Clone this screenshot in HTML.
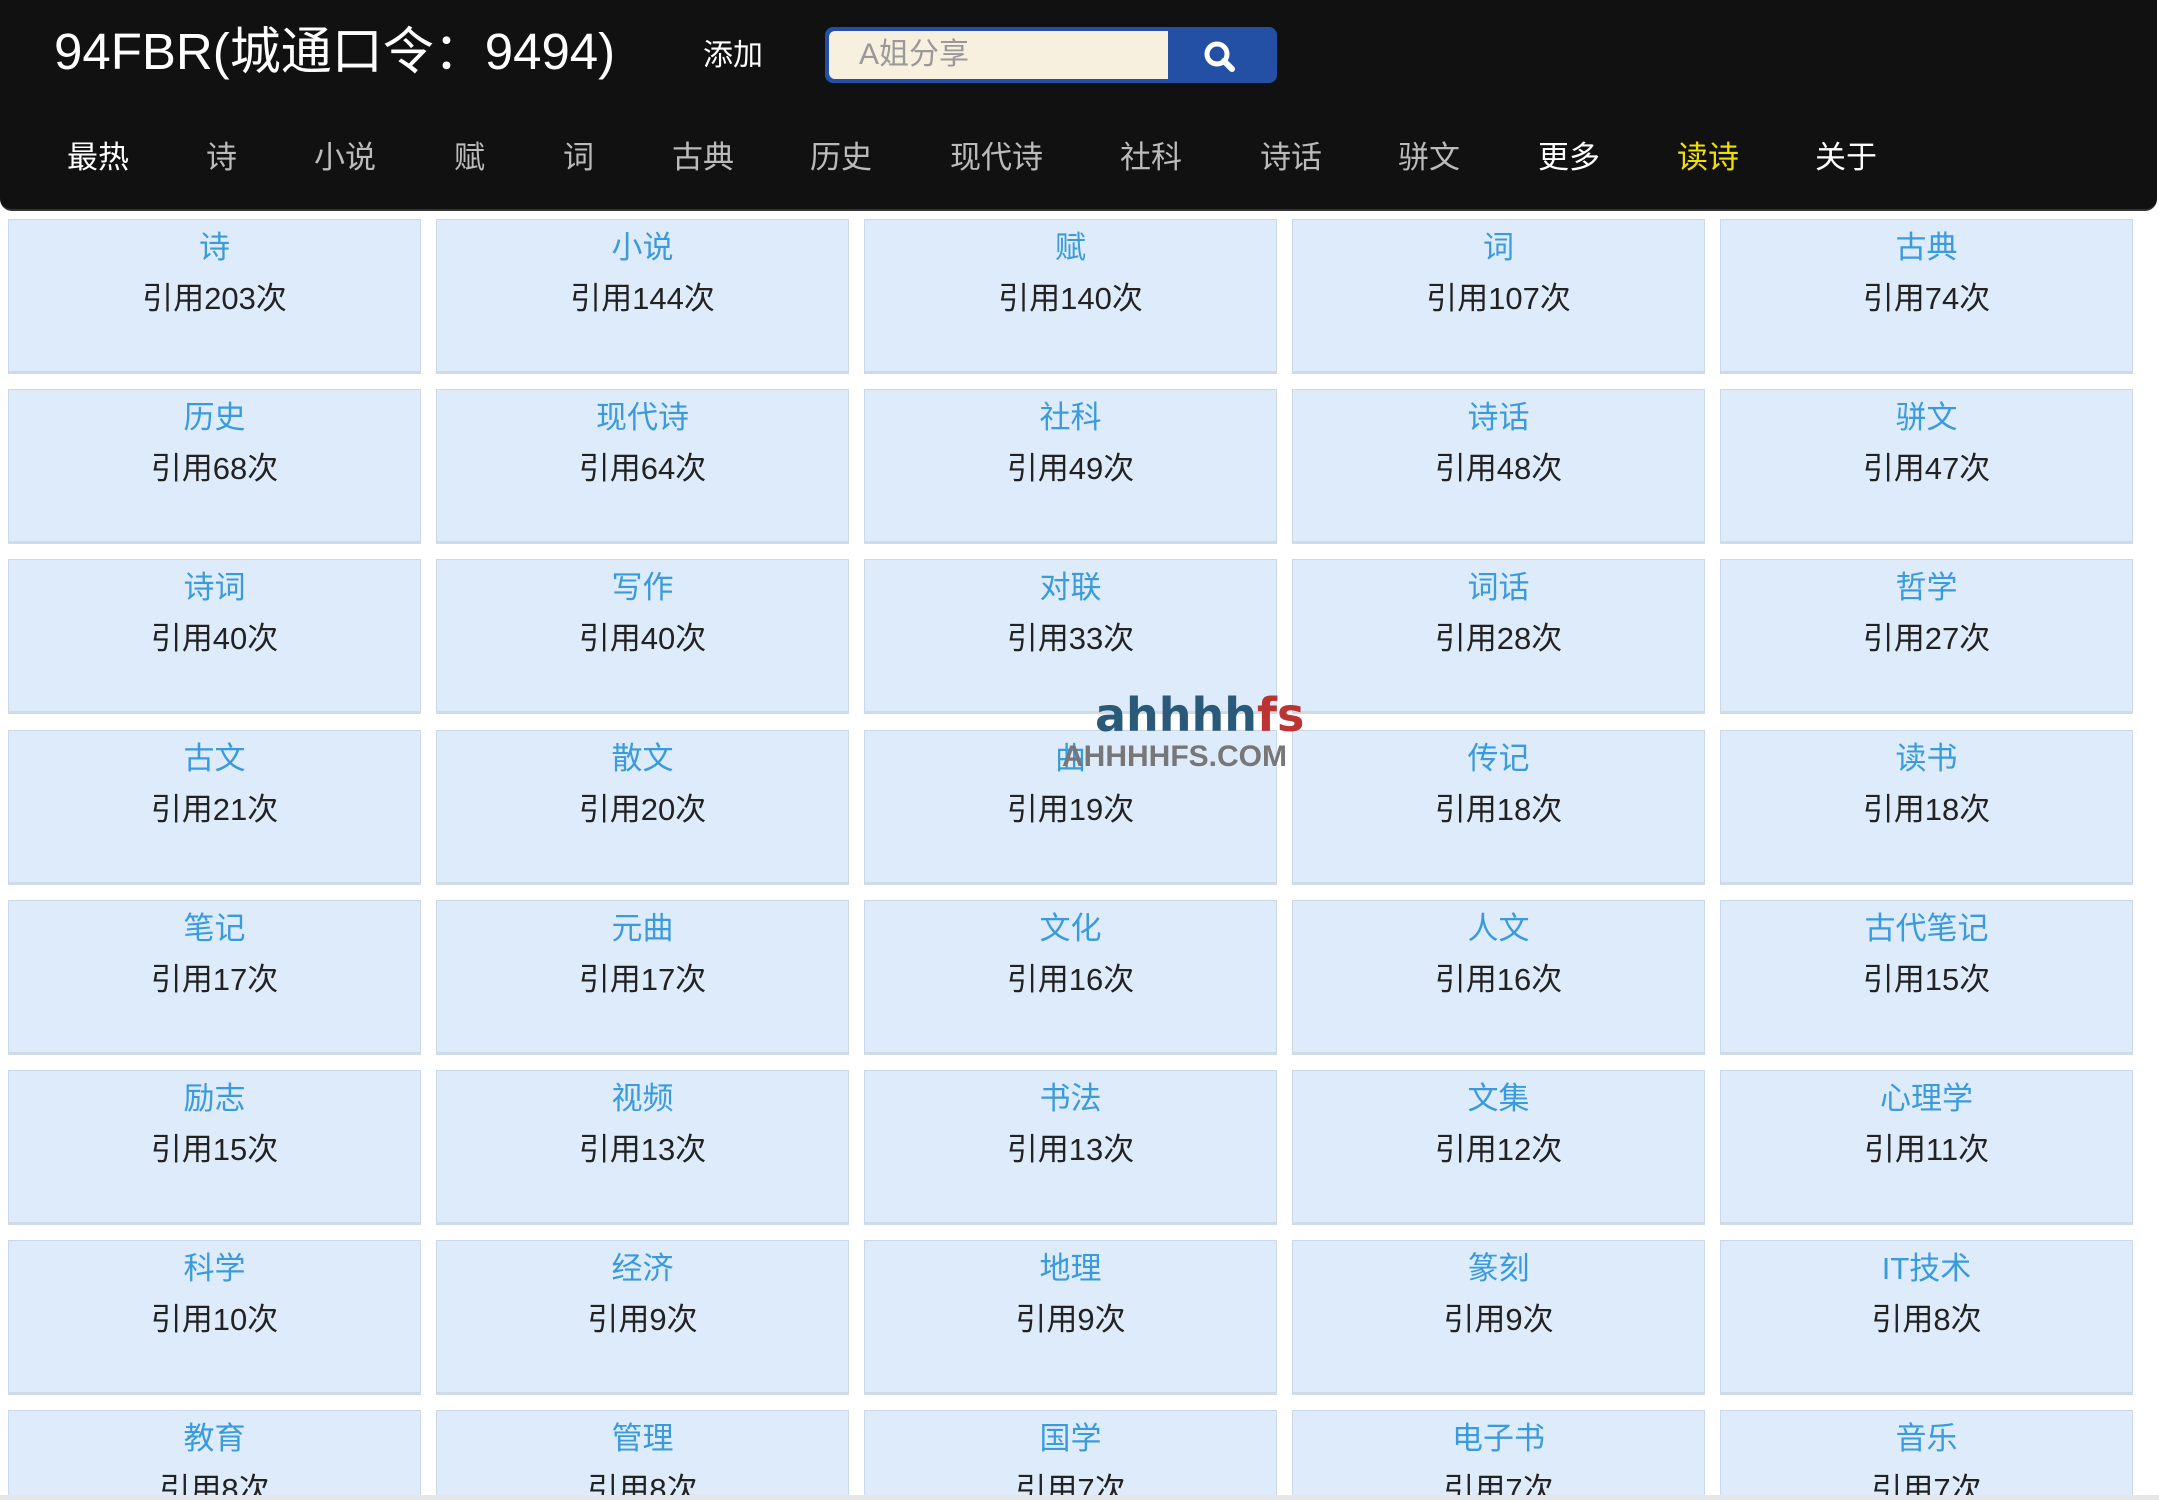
<!DOCTYPE html>
<html style="width:2159px;height:1500px;overflow:hidden"><head><meta charset="utf-8"><style>
*{margin:0;padding:0;box-sizing:border-box}
body{width:2159px;height:1500px;overflow:hidden;background:#fff;font-family:"Liberation Sans","Noto Sans CJK SC",sans-serif;position:relative}
.hdr{position:absolute;left:0;top:0;width:2157px;height:211px;background:#111;border-radius:0 0 12px 12px;border-bottom:2px solid #333}
.title{position:absolute;left:54px;top:22px;color:#fff;font-size:51px;line-height:60px}
.add{position:absolute;left:703px;top:36px;color:#fff;font-size:30px;line-height:40px}
.sb{position:absolute;left:825px;top:27px;width:452px;height:56px;border-radius:8px;background:#2350a5;overflow:hidden}
.inp{position:absolute;left:4px;top:4px;width:339px;height:48px;background:#f8f0de;border-radius:6px 0 0 6px;color:#999;font-size:30px;line-height:48px;padding-left:30px}
.nav{position:absolute;top:136px;font-size:31px;line-height:44px;color:#bbb}
.wrap{position:absolute;left:0;top:0;width:2159px;height:1495px;overflow:hidden}
.grid{position:absolute;left:8px;top:219px}
.c{position:absolute;width:413px;height:155px;background:#deebfa;border:1px solid #cbd8e6;border-bottom:3px solid #cfdbe7;text-align:center}
.t{position:absolute;left:0;right:0;top:7px;color:#3a9bdc;font-size:31px;line-height:42px}
.n{position:absolute;left:0;right:0;top:58px;color:#222;font-size:31px;line-height:42px}
.bar{position:absolute;left:0;top:1495px;width:2159px;height:5px;background:#e6e6e6}
</style></head><body>
<div class="wrap"><div class="grid" id="g"></div></div>
<div class="hdr">
<div class="title">94FBR(城通口令：9494)</div>
<div class="add">添加</div>
<div class="sb"><div class="inp">A姐分享</div>
<svg style="position:absolute;left:375px;top:10px" width="40" height="40" viewBox="0 0 40 40"><circle cx="17" cy="17" r="10" fill="none" stroke="#fff" stroke-width="5"/><line x1="24" y1="24" x2="32" y2="32" stroke="#fff" stroke-width="6" stroke-linecap="round"/></svg></div>
<div class="nav" style="left:67px;color:#fff">最热</div>
<div class="nav" style="left:206px">诗</div>
<div class="nav" style="left:314px">小说</div>
<div class="nav" style="left:454px">赋</div>
<div class="nav" style="left:563px">词</div>
<div class="nav" style="left:672px">古典</div>
<div class="nav" style="left:810px">历史</div>
<div class="nav" style="left:950px">现代诗</div>
<div class="nav" style="left:1120px">社科</div>
<div class="nav" style="left:1260px">诗话</div>
<div class="nav" style="left:1398px">骈文</div>
<div class="nav" style="left:1538px;color:#fff">更多</div>
<div class="nav" style="left:1677px;color:#f0e000">读诗</div>
<div class="nav" style="left:1815px;color:#fff">关于</div>
</div>
<div style="position:absolute;left:1095px;top:688px;font-size:46px;font-family:'DejaVu Sans',sans-serif;font-weight:bold;color:#2a5a7a">ahhhh<span style="color:#b33">fs</span></div>
<div style="position:absolute;left:1062px;top:740px;font-size:30px;font-weight:bold;color:#777">AHHHHFS.COM</div>
<div class="bar"></div>
<script>
var d=[["诗",203],["小说",144],["赋",140],["词",107],["古典",74],["历史",68],["现代诗",64],["社科",49],["诗话",48],["骈文",47],["诗词",40],["写作",40],["对联",33],["词话",28],["哲学",27],["古文",21],["散文",20],["曲",19],["传记",18],["读书",18],["笔记",17],["元曲",17],["文化",16],["人文",16],["古代笔记",15],["励志",15],["视频",13],["书法",13],["文集",12],["心理学",11],["科学",10],["经济",9],["地理",9],["篆刻",9],["IT技术",8],["教育",8],["管理",8],["国学",7],["电子书",7],["音乐",7]];
var h="";d.forEach(function(e,i){h+='<div class="c" style="left:'+(i%5)*428+'px;top:'+Math.floor(i/5)*170.2+'px"><div class="t">'+e[0]+'</div><div class="n">引用'+e[1]+'次</div></div>'});
document.getElementById("g").innerHTML=h;
</script>
</body></html>
